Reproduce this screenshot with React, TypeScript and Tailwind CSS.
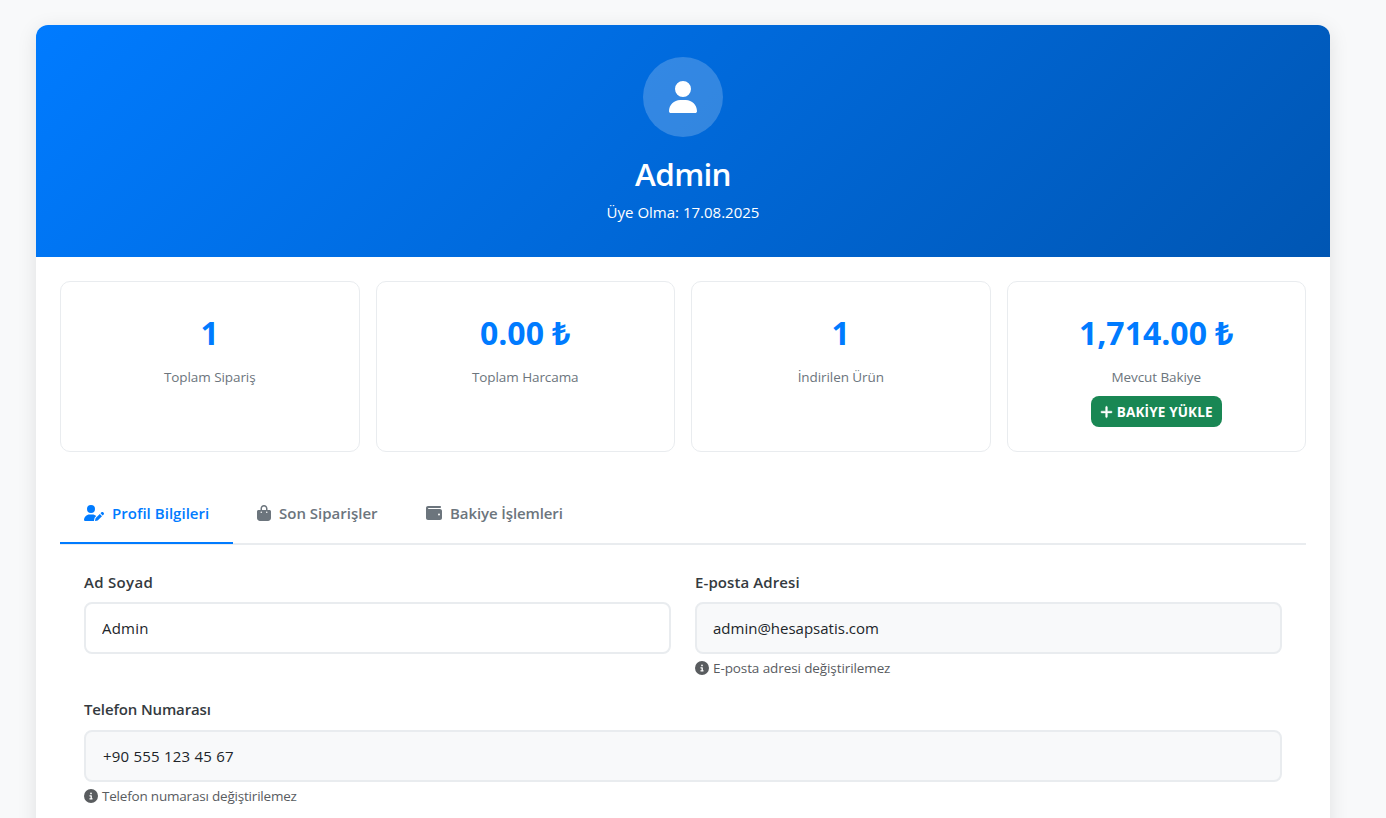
import type { ReactNode } from "react";
import { FaBagShopping, FaCircleInfo, FaPlus, FaUser, FaUserPen, FaWallet } from "react-icons/fa6";

const stats = [
  { id: 1, value: "1", label: "Toplam Sipariş" },
  { id: 2, value: "0.00 ₺", label: "Toplam Harcama" },
  { id: 3, value: "1", label: "İndirilen Ürün" },
  { id: 4, value: "1,714.00 ₺", label: "Mevcut Bakiye", topUp: true },
];

const tabs = [
  {
    id: "profile",
    title: "Profil Bilgileri",
    icon: <FaUserPen className="h-4 w-5 shrink-0" />,
    size: "w-[173px] tracking-[0.03px]",
    active: true,
  },
  {
    id: "orders",
    title: "Son Siparişler",
    icon: <FaBagShopping className="h-4 w-3.5 shrink-0" />,
    size: "w-[169px]",
  },
  {
    id: "balance",
    title: "Bakiye İşlemleri",
    icon: <FaWallet className="h-4 w-4 shrink-0" />,
    size: "w-[187px] tracking-[-0.1px]",
  },
];

type FieldProps = {
  label: string;
  value: string;
  labelClass?: string;
  inputClass?: string;
  note?: string;
  noteClass?: string;
  disabled?: boolean;
};

const Hint = ({ children, className = "" }: { children: ReactNode; className?: string }) => (
  <div className={`mt-1 flex h-5 items-center gap-1 text-[13.5px] text-[#595c5f] ${className}`}>
    <FaCircleInfo className="size-3.5" />
    <span>{children}</span>
  </div>
);

const Field = ({ label, value, labelClass = "", inputClass = "", note, noteClass, disabled }: FieldProps) => (
  <div className="flex-1">
    <label className={`block h-[33px] text-[15px] font-semibold text-[#343a40] ${labelClass}`}>{label}</label>
    <input
      className={`block h-[52px] w-full rounded-lg border-2 border-[#e9ecef] px-4 text-[15px] text-[#212529] outline-none ${
        disabled ? "bg-[#f8f9fa]" : "bg-white"
      } ${inputClass}`}
      defaultValue={value}
      readOnly={disabled}
    />
    {note && <Hint className={noteClass}>{note}</Hint>}
  </div>
);

const App = () => {
  return (
    <div className="h-screen overflow-hidden bg-[#f8f9fa] pt-[25px] pr-14 pl-9 font-['Open_Sans','Noto_Sans',sans-serif]">
      <div className="h-[1000px] overflow-hidden rounded-xl bg-white shadow-[0_4px_20px_rgba(0,0,0,0.1)]">
        <header className="flex h-[232px] flex-col items-center bg-[linear-gradient(135deg,#007bff,#0056b3)] pt-8 text-white">
          <div className="flex size-20 items-center justify-center rounded-full bg-white/20">
            <FaUser className="h-8 w-7" />
          </div>
          <h2 className="mt-4 text-[31.5px] leading-[42px] font-semibold tracking-[-0.7px]">Admin</h2>
          <p className="mt-1 text-[15px] leading-[26px]">Üye Olma: 17.08.2025</p>
        </header>

        <div className="p-6">
          <div className="grid grid-cols-4 gap-4">
            {stats.map(({ id, value, label, topUp }) => (
              <div
                key={id}
                className="flex h-[171px] flex-col items-center rounded-[10px] border border-[#e9ecef] pt-6"
              >
                <div className="text-[32px] leading-[54px] font-bold text-[#007bff]">{value}</div>
                <div className="mt-1.5 text-[13.5px] leading-[23px] tracking-[-0.08px] text-[#6c757d]">{label}</div>
                {topUp && (
                  <button className="mt-[7px] flex h-[31px] w-[131px] items-center justify-center gap-1 rounded-lg bg-[#198754] text-[13.5px] font-bold tracking-[0.15px] whitespace-nowrap text-white">
                    <FaPlus className="h-3.5 w-[13px] stroke-white stroke-[16]" />
                    <span className="pt-px">BAKİYE YÜKLE</span>
                  </button>
                )}
              </div>
            ))}
          </div>

          <nav className="mt-8 flex h-[61px] border-b-2 border-[#e9ecef]">
            {tabs.map(({ id, title, icon, size, active }) => (
              <button
                key={id}
                className={`flex h-[60px] items-center gap-2 border-b-2 px-6 text-[15px] font-semibold whitespace-nowrap ${size} ${
                  active ? "border-[#007bff] text-[#007bff]" : "border-transparent text-[#6c757d]"
                }`}
              >
                {icon}
                <span>{title}</span>
              </button>
            ))}
          </nav>

          <form className="px-6 pt-6">
            <div className="flex gap-6">
              <Field label="Ad Soyad" value="Admin" labelClass="leading-[27px] tracking-[0.3px]" inputClass="tracking-[0.2px]" />
              <Field
                label="E-posta Adresi"
                value="admin@hesapsatis.com"
                labelClass="leading-[27px] tracking-[0.1px]"
                note="E-posta adresi değiştirilemez"
                noteClass="tracking-[-0.1px]"
                disabled
              />
            </div>
            <div className="mt-[19px] flex">
              <Field
                label="Telefon Numarası"
                value="+90 555 123 45 67"
                labelClass="leading-[25px] tracking-[-0.13px]"
                inputClass="pl-[17px] tracking-[0.22px]"
                note="Telefon numarası değiştirilemez"
                noteClass="tracking-[-0.2px]"
                disabled
              />
            </div>
          </form>
        </div>
      </div>
    </div>
  );
};

export default App;
